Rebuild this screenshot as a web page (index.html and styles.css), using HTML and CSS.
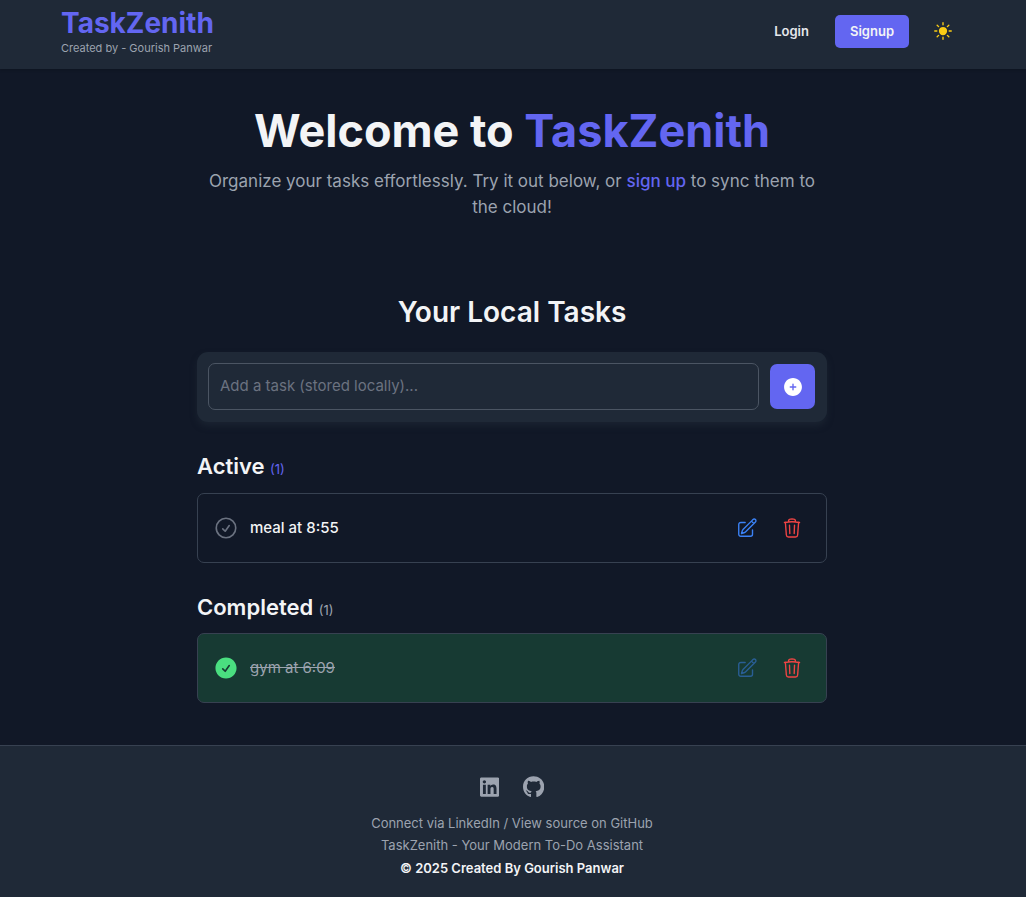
FILE: index.html
```html
<!DOCTYPE html>
<html lang="en">
<head>
<meta charset="utf-8">
<meta name="viewport" content="width=device-width, initial-scale=1">
<title>TaskZenith</title>
<link rel="stylesheet" href="styles.css">
</head>
<body>
<header class="site-header">
  <div class="header-inner">
    <div class="brand">
      <a class="brand-name" href="#">TaskZenith</a>
      <span class="brand-by">Created by - Gourish Panwar</span>
    </div>
    <nav class="nav">
      <a class="nav-login" href="#login">Login</a>
      <a class="nav-signup" href="#signup">Signup</a>
      <button class="theme-toggle" type="button" aria-label="Toggle theme">
        <svg class="icon" viewBox="0 0 24 24" fill="currentColor" aria-hidden="true"><path d="M12 2.250a.75.75 0 0 1 .75.75v2.250a.75.75 0 0 1-1.500 0V3a.75.75 0 0 1 .75-.75ZM7.500 12a4.500 4.500 0 1 1 9 0 4.500 4.500 0 0 1-9 0ZM18.894 6.166a.75.75 0 0 0-1.060-1.060l-1.591 1.590a.75.75 0 1 0 1.060 1.061l1.591-1.591ZM21.750 12a.75.75 0 0 1-.75.75h-2.250a.75.75 0 0 1 0-1.500H21a.75.75 0 0 1 .75.75ZM17.834 18.894a.75.75 0 0 0 1.060-1.060l-1.590-1.591a.75.75 0 1 0-1.061 1.060l1.591 1.591ZM12 18a.75.75 0 0 1 .75.75V21a.75.75 0 0 1-1.500 0v-2.250A.75.75 0 0 1 12 18ZM7.758 17.303a.75.75 0 0 0-1.061-1.060l-1.591 1.590a.75.75 0 0 0 1.060 1.061l1.592-1.591ZM6 12a.75.75 0 0 1-.75.75H3a.75.75 0 0 1 0-1.500h2.250A.75.75 0 0 1 6 12ZM6.697 7.757a.75.75 0 0 0 1.060-1.060l-1.590-1.591a.75.75 0 0 0-1.061 1.060l1.591 1.591Z"/></svg>
      </button>
    </nav>
  </div>
</header>

<main class="main">
  <section class="hero">
    <h1 class="hero-title">Welcome to <span class="accent">TaskZenith</span></h1>
    <p class="hero-text">Organize your tasks effortlessly. Try it out below, or <a class="hero-link" href="#signup">sign up</a> to sync them to the cloud!</p>
  </section>

  <section class="tasks">
    <h2 class="tasks-title">Your Local Tasks</h2>
    <form class="add-form">
      <input class="add-input" type="text" aria-label="New task" placeholder="Add a task (stored locally)...">
      <button class="add-button" type="button" aria-label="Add task">
        <svg class="icon" viewBox="0 0 24 24" fill="currentColor" aria-hidden="true"><path fill-rule="evenodd" d="M12 2.250c-5.385 0-9.750 4.365-9.750 9.750s4.365 9.750 9.750 9.750 9.750-4.365 9.750-9.750S17.385 2.250 12 2.250ZM12.750 9a.75.75 0 0 0-1.500 0v2.250H9a.75.75 0 0 0 0 1.500h2.250V15a.75.75 0 0 0 1.500 0v-2.250H15a.75.75 0 0 0 0-1.500h-2.250V9Z"/></svg>
      </button>
    </form>

    <h3 class="list-title">Active <span class="count accent">(1)</span></h3>
    <ul class="list">
      <li class="task">
        <button class="task-check" type="button" aria-label="Mark complete">
          <svg class="icon-check" viewBox="0 0 24 24" fill="none" stroke="currentColor" stroke-width="1.5" stroke-linecap="round" stroke-linejoin="round" aria-hidden="true"><path d="M9 12.750 11.250 15 15 9.750M21 12a9 9 0 1 1-18 0 9 9 0 0 1 18 0Z"/></svg>
        </button>
        <span class="task-text">meal at 8:55</span>
        <button class="task-action edit" type="button" aria-label="Edit task">
          <svg class="icon" viewBox="0 0 24 24" fill="none" stroke="currentColor" stroke-width="1.5" stroke-linecap="round" stroke-linejoin="round" aria-hidden="true"><path d="m16.862 4.487 1.687-1.688a1.875 1.875 0 1 1 2.652 2.652L10.582 16.070a4.500 4.500 0 0 1-1.897 1.130L6 18l.8-2.685a4.500 4.500 0 0 1 1.130-1.897l8.932-8.931Zm0 0L19.500 7.125M18 14v4.750A2.250 2.250 0 0 1 15.750 21H5.250A2.250 2.250 0 0 1 3 18.750V8.250A2.250 2.250 0 0 1 5.250 6H10"/></svg>
        </button>
        <button class="task-action delete" type="button" aria-label="Delete task">
          <svg class="icon" viewBox="0 0 24 24" fill="none" stroke="currentColor" stroke-width="1.5" stroke-linecap="round" stroke-linejoin="round" aria-hidden="true"><path d="m14.740 9-.346 9m-4.788 0L9.260 9m9.968-3.210c.342.052.682.107 1.022.166m-1.022-.165L18.160 19.673a2.250 2.250 0 0 1-2.244 2.077H8.084a2.250 2.250 0 0 1-2.244-2.077L4.772 5.790m14.456 0a48.108 48.108 0 0 0-3.478-.397m-12 .562c.34-.059.68-.114 1.022-.165m0 0a48.110 48.110 0 0 1 3.478-.397m7.500 0v-.916c0-1.180-.910-2.164-2.090-2.201a51.964 51.964 0 0 0-3.320 0c-1.180.037-2.090 1.022-2.090 2.201v.916m7.500 0a48.667 48.667 0 0 0-7.500 0"/></svg>
        </button>
      </li>
    </ul>

    <h3 class="list-title">Completed <span class="count">(1)</span></h3>
    <ul class="list">
      <li class="task task-done">
        <button class="task-check" type="button" aria-label="Mark active">
          <svg class="icon-check" viewBox="0 0 24 24" fill="currentColor" aria-hidden="true"><path fill-rule="evenodd" d="M2.250 12c0-5.385 4.365-9.750 9.750-9.750s9.750 4.365 9.750 9.750-4.365 9.750-9.750 9.750S2.250 17.385 2.250 12Zm13.360-1.814a.75.75 0 1 0-1.220-.872l-3.236 4.530L9.530 12.220a.75.75 0 0 0-1.060 1.060l2.250 2.250a.75.75 0 0 0 1.140-.094l3.750-5.250Z"/></svg>
        </button>
        <span class="task-text">gym at 6:09</span>
        <button class="task-action edit" type="button" aria-label="Edit task" disabled>
          <svg class="icon" viewBox="0 0 24 24" fill="none" stroke="currentColor" stroke-width="1.5" stroke-linecap="round" stroke-linejoin="round" aria-hidden="true"><path d="m16.862 4.487 1.687-1.688a1.875 1.875 0 1 1 2.652 2.652L10.582 16.070a4.500 4.500 0 0 1-1.897 1.130L6 18l.8-2.685a4.500 4.500 0 0 1 1.130-1.897l8.932-8.931Zm0 0L19.500 7.125M18 14v4.750A2.250 2.250 0 0 1 15.750 21H5.250A2.250 2.250 0 0 1 3 18.750V8.250A2.250 2.250 0 0 1 5.250 6H10"/></svg>
        </button>
        <button class="task-action delete" type="button" aria-label="Delete task">
          <svg class="icon" viewBox="0 0 24 24" fill="none" stroke="currentColor" stroke-width="1.5" stroke-linecap="round" stroke-linejoin="round" aria-hidden="true"><path d="m14.740 9-.346 9m-4.788 0L9.260 9m9.968-3.210c.342.052.682.107 1.022.166m-1.022-.165L18.160 19.673a2.250 2.250 0 0 1-2.244 2.077H8.084a2.250 2.250 0 0 1-2.244-2.077L4.772 5.790m14.456 0a48.108 48.108 0 0 0-3.478-.397m-12 .562c.34-.059.68-.114 1.022-.165m0 0a48.110 48.110 0 0 1 3.478-.397m7.500 0v-.916c0-1.180-.910-2.164-2.090-2.201a51.964 51.964 0 0 0-3.320 0c-1.180.037-2.090 1.022-2.090 2.201v.916m7.500 0a48.667 48.667 0 0 0-7.500 0"/></svg>
        </button>
      </li>
    </ul>
  </section>
</main>

<footer class="footer">
  <div class="social">
    <a class="social-link" href="#linkedin" aria-label="LinkedIn">
      <svg class="icon-social" viewBox="0 0 448 512" fill="currentColor" aria-hidden="true"><path d="M416 32H31.900C14.300 32 0 46.500 0 64.300v383.400C0 465.500 14.300 480 31.900 480H416c17.600 0 32-14.500 32-32.300V64.300c0-17.800-14.400-32.300-32-32.300zM135.400 416H69V202.200h66.500V416zm-33.200-243c-21.300 0-38.500-17.300-38.500-38.500S80.900 96 102.200 96c21.200 0 38.500 17.300 38.500 38.500 0 21.300-17.200 38.500-38.500 38.500zm282.100 243h-66.400V312c0-24.800-.5-56.700-34.500-56.700-34.600 0-39.900 27-39.900 54.900V416h-66.400V202.200h63.700v29.200h.9c8.900-16.800 30.600-34.500 62.900-34.500 67.200 0 79.700 44.300 79.700 101.900V416z"/></svg>
    </a>
    <a class="social-link" href="#github" aria-label="GitHub">
      <svg class="icon-social" viewBox="0 0 496 512" fill="currentColor" aria-hidden="true"><path d="M244.800 8C106.100 8 0 113.300 0 252c0 110.900 69.800 205.800 169.500 239.200 12.800 2.300 17.300-5.600 17.300-12.100 0-6.200-.3-40.400-.3-61.400 0 0-70 15-84.700-29.800 0 0-11.400-29.100-27.800-36.600 0 0-22.900-15.700 1.600-15.400 0 0 24.900 2 38.600 25.800 21.900 38.600 58.600 27.500 72.900 20.900 2.300-16 8.800-27.100 16-33.700-55.900-6.200-112.300-14.300-112.300-110.500 0-27.500 7.600-41.300 23.600-58.900-2.600-6.500-11.100-33.300 2.600-67.900 20.900-6.500 69 27 69 27 20-5.600 41.500-8.500 62.800-8.500s42.800 2.900 62.800 8.500c0 0 48.100-33.600 69-27 13.700 34.700 5.200 61.400 2.600 67.900 16 17.700 25.800 31.500 25.800 58.900 0 96.500-58.900 104.200-114.800 110.500 9.200 7.900 17 22.900 17 46.400 0 33.700-.3 75.400-.3 83.600 0 6.500 4.600 14.400 17.300 12.100C428.200 457.800 496 362.900 496 252 496 113.300 383.500 8 244.800 8z"/></svg>
    </a>
  </div>
  <p class="footer-text">Connect via LinkedIn / View source on GitHub</p>
  <p class="footer-text">TaskZenith - Your Modern To-Do Assistant</p>
  <p class="footer-copy">© 2025 Created By Gourish Panwar</p>
</footer>
</body>
</html>
```
FILE: styles.css
```css
*, *::before, *::after { box-sizing: border-box; }

body {
  margin: 0;
  min-height: 100vh;
  display: flex;
  flex-direction: column;
  background: #111827;
  color: #f3f4f6;
  font-family: Inter, "Liberation Sans", sans-serif;
  font-size: 15px;
  line-height: 22px;
}

h1, h2, h3, p, ul { margin: 0; padding: 0; }
ul { list-style: none; }
a { text-decoration: none; }
svg { display: block; }

button {
  padding: 0;
  border: 0;
  background: none;
  font: inherit;
  cursor: pointer;
}

.accent { color: #6366f1; }
.icon { width: 22px; height: 22px; }
.icon-check { width: 26px; height: 26px; }

.site-header {
  background: #1f2937;
  box-shadow: 0 1px 3px rgba(0, 0, 0, 0.2);
}

.header-inner {
  display: flex;
  align-items: center;
  justify-content: space-between;
  max-width: 1200px;
  margin: 0 auto;
  padding: 6px 64px 13px 61px;
}

.brand { display: flex; flex-direction: column; }
.brand-name { color: #6366f1; font-size: 28px; font-weight: 700; line-height: 34px; }
.brand-by { color: #9ca3af; font-size: 11px; line-height: 16px; }

.nav {
  display: flex;
  align-items: center;
  font-size: 13px;
  font-weight: 600;
}

.nav-login { padding: 0 11px; color: #e5e7eb; }

.nav-signup {
  margin-left: 15px;
  padding: 5px 15px 6px;
  border-radius: 5px;
  background: #6366f1;
  color: #f3f4f6;
}

.theme-toggle { margin-left: 15px; padding: 8px; color: #facc15; }

.main {
  flex: 1;
  width: 100%;
  padding: 39px 17px 41px 15px;
}

.hero, .tasks { max-width: 630px; margin: 0 auto; }
.hero { margin-bottom: 75px; text-align: center; }
.hero-title { margin-bottom: 15px; font-size: 45px; font-weight: 700; line-height: 45px; }
.hero-text { color: #9ca3af; font-size: 17px; line-height: 26px; }
.hero-link { color: #6366f1; font-weight: 500; }

.tasks-title {
  margin-bottom: 23px;
  font-size: 28px;
  font-weight: 600;
  line-height: 34px;
  text-align: center;
}

.add-form {
  display: flex;
  align-items: center;
  gap: 11px;
  margin-bottom: 29px;
  padding: 11px 12px 12px 11px;
  border-radius: 11px;
  background: #1f2937;
  box-shadow: 0 4px 6px rgba(31, 41, 55, 0.6);
}

.add-input {
  flex: 1;
  min-width: 0;
  height: 47px;
  padding: 0 11px 2px;
  border: 1px solid #4b5563;
  border-radius: 7px;
  background: transparent;
  color: #f3f4f6;
  font: inherit;
}

.add-input::placeholder { color: #6b7280; opacity: 1; }

.add-button {
  display: grid;
  place-items: center;
  width: 45px;
  height: 45px;
  border-radius: 7px;
  background: #6366f1;
  color: #fff;
}

.list-title { margin-bottom: 12px; font-size: 22px; font-weight: 600; line-height: 30px; }
.count { font-size: 13px; font-weight: 400; line-height: 1; }
.count:not(.accent) { color: #9ca3af; }
.list + .list-title { margin-top: 29px; margin-bottom: 11px; }

.task {
  display: flex;
  align-items: center;
  padding: 15px;
  border: 1px solid #374151;
  border-radius: 7px;
}

.task-check { color: #6b7280; }
.task-text { flex: 1; margin-left: 11px; font-weight: 500; }
.task-action { margin-left: 7px; padding: 8px; }
.edit { color: #3b82f6; }
.delete { color: #ef4444; }

.task-done { background: #173a33; }
.task-done .task-check { color: #4ade80; }
.task-done .task-text { color: #9ca3af; font-weight: 400; text-decoration: line-through; }
.task-done .edit { opacity: 0.5; cursor: default; }

.footer {
  padding: 30px 2px 18px 0;
  border-top: 1px solid #374151;
  background: #1f2937;
  text-align: center;
  font-size: 13px;
}

.social {
  display: flex;
  justify-content: center;
  gap: 24px;
  margin-bottom: 14px;
}

.social-link { color: #9ca3af; }
.icon-social { width: auto; height: 22px; }
.footer-text { color: #9ca3af; }
.footer-copy { margin-top: 1px; font-weight: 600; }
```
